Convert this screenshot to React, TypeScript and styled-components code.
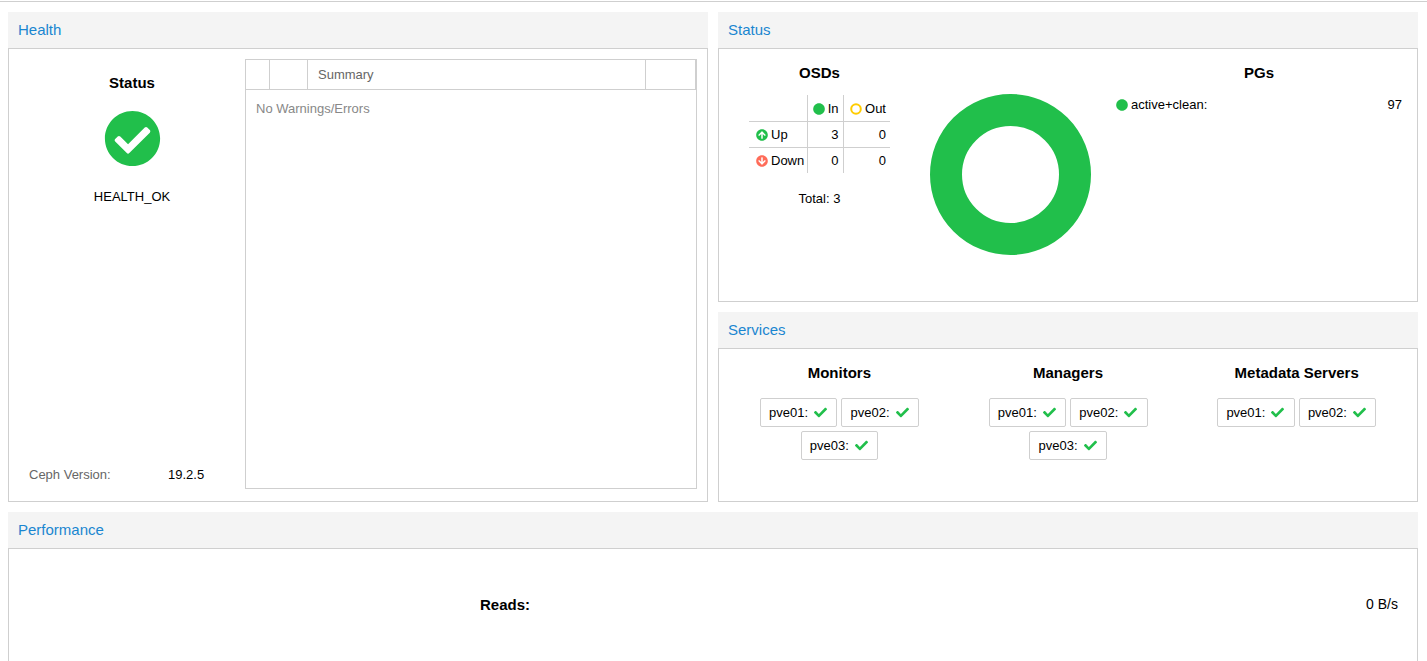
import React from 'react';
import styled, { createGlobalStyle } from 'styled-components';
import {
  FaArrowCircleDown,
  FaArrowCircleUp,
  FaCheck,
  FaCheckCircle,
  FaCircle,
} from 'react-icons/fa';

const GREEN = '#21bf4b';
const LINE = '#cfcfcf';

const GlobalStyle = createGlobalStyle`
  html, body {
    margin: 0;
    height: 100%;
    background: #fff;
    overflow: hidden;
  }
  body {
    font-family: "Liberation Sans", Arial, sans-serif;
    font-size: 13px;
    color: #000;
  }
`;

const Page = styled.div`
  height: 661px;
  overflow: hidden;
  box-sizing: border-box;
  border-top: 1px solid ${LINE};
  margin-top: 1px;
  padding: 10px 9px 0 8px;
  display: grid;
  grid-template-columns: 700px 700px;
  grid-template-rows: 290px 190px 300px;
  column-gap: 10px;
  row-gap: 10px;
`;

const Panel = styled.section<{ $rows?: number; $wide?: boolean }>`
  display: flex;
  flex-direction: column;
  grid-row: ${({ $rows }) => ($rows ? `span ${$rows}` : 'auto')};
  grid-column: ${({ $wide }) => ($wide ? '1 / -1' : 'auto')};
  min-height: 0;
`;

const PanelHeader = styled.header`
  height: 36px;
  flex: none;
  background: #f4f4f4;
  color: #1a86d0;
  font-size: 15px;
  line-height: 35px;
  padding-left: 10px;
`;

const PanelBody = styled.div`
  flex: 1;
  min-height: 0;
  border: 1px solid ${LINE};
  display: flex;
`;

const Title = styled.div`
  font-weight: bold;
  font-size: 15px;
  line-height: 17px;
  text-align: center;
`;

const HealthSide = styled.div`
  width: 236px;
  flex: none;
  display: flex;
  flex-direction: column;
  align-items: center;
  box-sizing: border-box;
  padding: 25px 0 0 10px;
`;

const BigCheck = styled(FaCheckCircle)`
  width: 57px;
  height: 57px;
  color: ${GREEN};
  margin-top: 19px;
`;

const HealthText = styled.div`
  margin-top: 22px;
`;

const VersionRow = styled.div`
  margin-top: auto;
  margin-bottom: 19px;
  width: 100%;
  display: flex;
  box-sizing: border-box;
  padding-left: 10px;
`;

const VersionLabel = styled.span`
  width: 139px;
  color: #666;
`;

const Grid = styled.div`
  flex: 1;
  margin: 10px 10px 12px 0;
  border: 1px solid ${LINE};
  display: flex;
  flex-direction: column;
`;

const GridHead = styled.div`
  height: 29px;
  display: flex;
  border-bottom: 1px solid ${LINE};
  border-right: 1px solid ${LINE};
  flex: none;
`;

const GridCol = styled.div<{ $width?: number }>`
  width: ${({ $width }) => ($width ? `${$width}px` : 'auto')};
  flex: ${({ $width }) => ($width ? 'none' : '1')};
  border-right: 1px solid ${LINE};
  color: #666;
  line-height: 29px;
  padding-left: 10px;
  box-sizing: border-box;
  &:last-child {
    border-right: none;
  }
`;

const GridEmpty = styled.div`
  padding: 11px 10px;
  color: #888;
`;

const StatusBody = styled(PanelBody)`
  padding-left: 30px;
`;

const OsdColumn = styled.div`
  width: 141px;
  flex: none;
  padding-top: 15px;
`;

const OsdTable = styled.table`
  border-collapse: collapse;
  margin-top: 14px;
  width: 141px;
  table-layout: fixed;

  th, td {
    box-sizing: border-box;
    font-weight: normal;
    height: 26px;
    padding: 0 4px 0 3px;
    text-align: right;
    white-space: nowrap;
    border-bottom: 1px solid ${LINE};
    border-left: 1px solid ${LINE};
  }
  th {
    padding-top: 2px;
  }
  tr:last-child td {
    border-bottom: none;
  }
  th:first-child, td:first-child {
    border-left: none;
    width: 58px;
    text-align: left;
    padding: 0 0 0 7px;
  }
  th:nth-child(2), td:nth-child(2) {
    width: 36px;
  }
`;

const StatIcon = styled.span<{ $color: string }>`
  color: ${({ $color }) => $color};
  display: inline-flex;
  vertical-align: -2px;
  margin-right: 3px;
  svg {
    width: 12px;
    height: 12px;
  }
`;

const Total = styled.div`
  text-align: center;
  margin-top: 18px;
`;

const DonutWrap = styled.div`
  width: 161px;
  height: 161px;
  flex: none;
  margin: 45px 0 0 40px;
`;

const PgColumn = styled.div`
  flex: 1;
  margin: 0 15px 0 25px;
  padding-top: 15px;
`;

const PgRow = styled.div`
  display: flex;
  justify-content: space-between;
  align-items: center;
  margin-top: 16px;
`;

const PgLabel = styled.span`
  display: inline-flex;
  align-items: center;
`;

const ServicesBody = styled(PanelBody)`
  padding: 0 6px;
`;

const ServiceColumn = styled.div`
  flex: 1;
  padding-top: 15px;
`;

const ChipWrap = styled.div`
  display: flex;
  flex-wrap: wrap;
  justify-content: center;
  gap: 4px;
  margin: 17px 30px 0;
`;

const Chip = styled.div`
  height: 29px;
  box-sizing: border-box;
  width: 77.5px;
  border: 1px solid ${LINE};
  border-radius: 2px;
  display: flex;
  align-items: center;
  justify-content: center;
  gap: 6px;
  padding-right: 1px;
  svg {
    width: 13px;
    height: 13px;
    color: ${GREEN};
  }
`;

const PerfBody = styled(PanelBody)`
  padding: 47px 19px 0 471px;
  justify-content: space-between;
  align-items: flex-start;
`;

const PerfLabel = styled.span`
  font-weight: bold;
  font-size: 15px;
  line-height: 17px;
`;

const PerfValue = styled.span`
  font-size: 14px;
  line-height: 17px;
`;

const RingIcon: React.FC = () => (
  <svg viewBox="0 0 12 12">
    <circle cx="6" cy="6" r="4.8" fill="none" stroke="currentColor" strokeWidth="2" />
  </svg>
);

const Node: React.FC<{ name: string }> = ({ name }) => (
  <Chip>
    {name}:
    <FaCheck />
  </Chip>
);

const Service: React.FC<{ title: string; nodes: string[] }> = ({ title, nodes }) => (
  <ServiceColumn>
    <Title>{title}</Title>
    <ChipWrap>
      {nodes.map((n) => (
        <Node key={n} name={n} />
      ))}
    </ChipWrap>
  </ServiceColumn>
);

const App: React.FC = () => (
  <>
    <GlobalStyle />
    <Page>
      <Panel $rows={2}>
        <PanelHeader>Health</PanelHeader>
        <PanelBody>
          <HealthSide>
            <Title>Status</Title>
            <BigCheck />
            <HealthText>HEALTH_OK</HealthText>
            <VersionRow>
              <VersionLabel>Ceph Version:</VersionLabel>
              <span>19.2.5</span>
            </VersionRow>
          </HealthSide>
          <Grid>
            <GridHead>
              <GridCol $width={24} />
              <GridCol $width={38} />
              <GridCol>Summary</GridCol>
              <GridCol $width={49} />
            </GridHead>
            <GridEmpty>No Warnings/Errors</GridEmpty>
          </Grid>
        </PanelBody>
      </Panel>

      <Panel>
        <PanelHeader>Status</PanelHeader>
        <StatusBody>
          <OsdColumn>
            <Title>OSDs</Title>
            <OsdTable>
              <tbody>
                <tr>
                  <th />
                  <th>
                    <StatIcon $color={GREEN}>
                      <FaCircle />
                    </StatIcon>
                    In
                  </th>
                  <th>
                    <StatIcon $color="#ffcc00">
                      <RingIcon />
                    </StatIcon>
                    Out
                  </th>
                </tr>
                <tr>
                  <td>
                    <StatIcon $color={GREEN}>
                      <FaArrowCircleUp />
                    </StatIcon>
                    Up
                  </td>
                  <td>3</td>
                  <td>0</td>
                </tr>
                <tr>
                  <td>
                    <StatIcon $color="#ff6c59">
                      <FaArrowCircleDown />
                    </StatIcon>
                    Down
                  </td>
                  <td>0</td>
                  <td>0</td>
                </tr>
              </tbody>
            </OsdTable>
            <Total>Total: 3</Total>
          </OsdColumn>
          <DonutWrap>
            <svg width="161" height="161" viewBox="0 0 161 161">
              <circle cx="80.5" cy="80.5" r="64.5" fill="none" stroke={GREEN} strokeWidth="32" />
            </svg>
          </DonutWrap>
          <PgColumn>
            <Title>PGs</Title>
            <PgRow>
              <PgLabel>
                <StatIcon $color={GREEN}>
                  <FaCircle />
                </StatIcon>
                active+clean:
              </PgLabel>
              <span>97</span>
            </PgRow>
          </PgColumn>
        </StatusBody>
      </Panel>

      <Panel>
        <PanelHeader>Services</PanelHeader>
        <ServicesBody>
          <Service title="Monitors" nodes={['pve01', 'pve02', 'pve03']} />
          <Service title="Managers" nodes={['pve01', 'pve02', 'pve03']} />
          <Service title="Metadata Servers" nodes={['pve01', 'pve02']} />
        </ServicesBody>
      </Panel>

      <Panel $wide>
        <PanelHeader>Performance</PanelHeader>
        <PerfBody>
          <PerfLabel>Reads:</PerfLabel>
          <PerfValue>0 B/s</PerfValue>
        </PerfBody>
      </Panel>
    </Page>
  </>
);

export default App;
